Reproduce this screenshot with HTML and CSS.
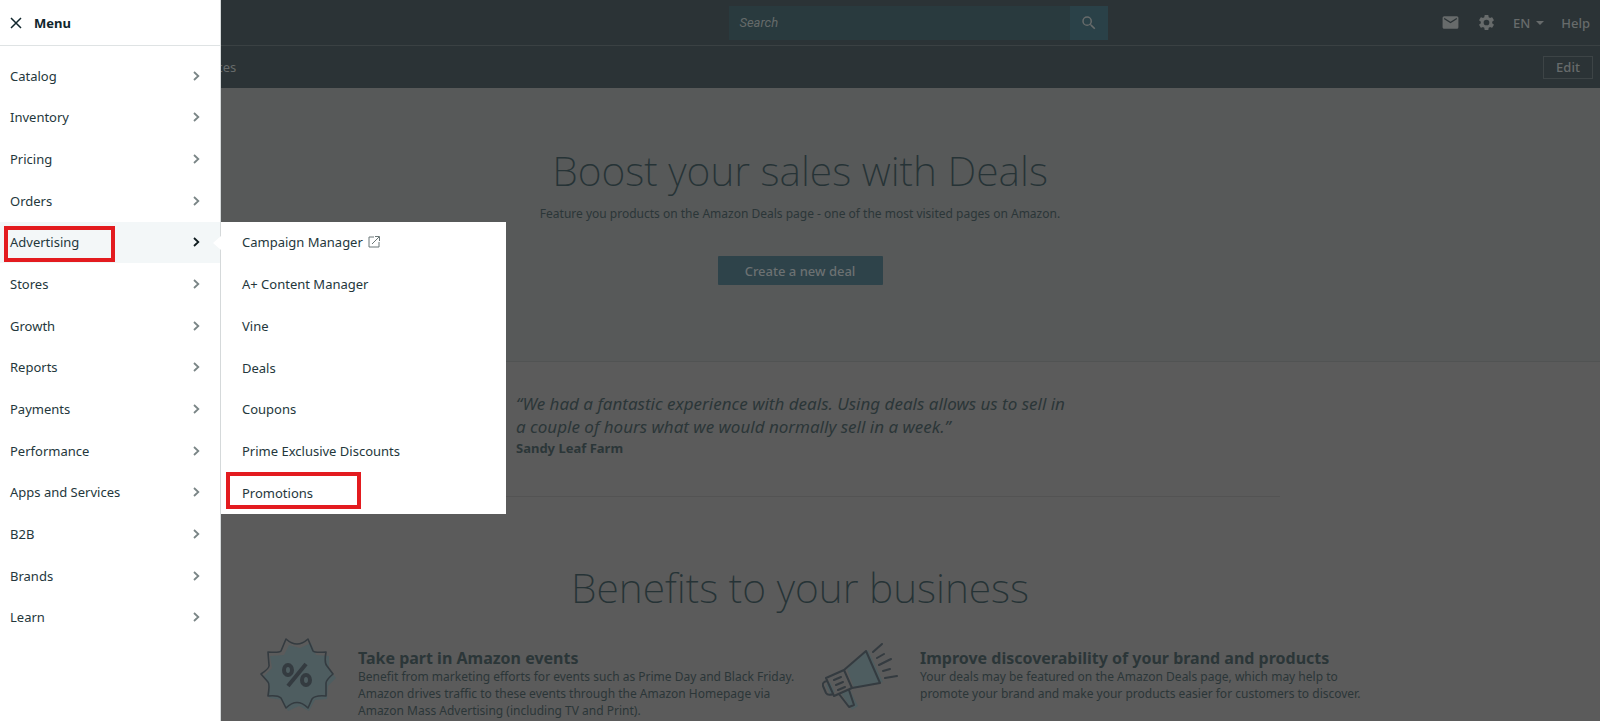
FILE: index.html
```
<!DOCTYPE html>
<html lang="en">
<head>
<meta charset="utf-8">
<title>Deals</title>
<link rel="stylesheet" href="styles.css">
</head>
<body>
<svg width="0" height="0" class="symbols" aria-hidden="true">
  <symbol id="chevron" viewBox="0 0 7 10"><path fill="none" stroke="currentColor" stroke-width="1.800" d="m1 1 4.300 4L1 9"/></symbol>
</svg>
<header class="topbar">
  <form class="search">
    <input class="search-input" type="text" placeholder="Search" aria-label="Search">
    <button class="search-button" type="button" aria-label="Search">
      <svg width="18" height="18" viewBox="0 0 24 24"><path fill="currentColor" d="M15.5 14h-.79l-.28-.27A6.47 6.47 0 0 0 16 9.5 6.5 6.5 0 1 0 9.5 16c1.61 0 3.09-.59 4.23-1.57l.27.28v.79l5 4.99L20.49 19l-4.99-5zm-6 0a4.5 4.5 0 1 1 0-9 4.5 4.5 0 0 1 0 9z"/></svg>
    </button>
  </form>
  <div class="tools">
    <a class="tool" href="#" aria-label="Messages"><svg width="19" height="19" viewBox="0 0 24 24"><path fill="currentColor" d="M20 4H4a2 2 0 0 0-2 2v12c0 1.100.9 2 2 2h16a2 2 0 0 0 2-2V6a2 2 0 0 0-2-2zm0 4-8 5-8-5V6l8 5 8-5v2z"/></svg></a>
    <a class="tool" href="#" aria-label="Settings"><svg width="19" height="19" viewBox="0 0 24 24"><path fill="currentColor" d="M19.140 12.940c.04-.3.060-.61.060-.94s-.02-.64-.07-.94l2.030-1.580a.49.49 0 0 0 .12-.61l-1.920-3.320a.49.49 0 0 0-.59-.22l-2.390.96a7 7 0 0 0-1.620-.94l-.36-2.540a.48.48 0 0 0-.48-.41h-3.840a.47.47 0 0 0-.47.41l-.36 2.540c-.59.24-1.130.57-1.620.94l-2.390-.96a.48.48 0 0 0-.59.22L2.740 8.870a.47.47 0 0 0 .12.61l2.030 1.580c-.05.3-.09.63-.09.94s.02.64.07.94l-2.030 1.580a.49.49 0 0 0-.12.61l1.920 3.320c.12.22.37.29.59.22l2.390-.96c.5.38 1.030.7 1.620.94l.36 2.540c.05.24.24.41.48.41h3.840c.24 0 .44-.17.47-.41l.36-2.540a7 7 0 0 0 1.620-.94l2.390.96c.22.080.47 0 .59-.22l1.920-3.320a.47.47 0 0 0-.12-.61zM12 15.600a3.600 3.600 0 1 1 0-7.200 3.600 3.600 0 0 1 0 7.200z"/></svg></a>
    <button class="tool language" type="button">EN <svg width="8" height="4" viewBox="0 0 8 4"><path fill="currentColor" d="M0 0h8L4 4z"/></svg></button>
    <a class="tool" href="#">Help</a>
  </div>
</header>
<nav class="subbar">
  <a class="subbar-link" href="#">Apps and Services</a>
  <button class="edit" type="button">Edit</button>
</nav>

<main>
  <section class="hero">
    <h1 class="display">Boost your sales with Deals</h1>
    <p class="lead">Feature you products on the Amazon Deals page - one of the most visited pages on Amazon.</p>
    <button class="primary" type="button">Create a new deal</button>
  </section>
  <section class="quote">
    <blockquote class="quote-body">
      <p class="quote-text">“We had a fantastic experience with deals. Using deals allows us to sell in<br>a couple of hours what we would normally sell in a week.”</p>
      <cite class="quote-author">Sandy Leaf Farm</cite>
    </blockquote>
  </section>
  <section class="benefits">
    <h2 class="display">Benefits to your business</h2>
    <div class="benefit-grid">
      <article class="benefit">
        <svg class="benefit-icon" width="76" height="76" viewBox="0 0 76 76">
          <path fill="#4e5d60" d="M29 8 40 11 51 6 56 18 69 19 69 32 76 41 68 49 67 62 55 63 49 74 39 69 28 74 22 63 9 61 9 49 4 39 12 31 10 19 24 18Z"/>
          <path fill="none" stroke="#343b40" stroke-width="1.600" stroke-linejoin="round" d="M26 2Q37 12 48 2L53 14Q55 16 66 15Q64 26 67 29L73 37Q66 43 66 46L66 59Q55 58 52 62L48 71Q37 60 26 71L21 61Q18 58 8 59Q10 47 8 45L1 37Q10 31 9 28L8 15Q19 16 21 14Z"/>
          <g fill="none" stroke="#343b40" stroke-width="4"><ellipse cx="28" cy="33" rx="4" ry="5"/><ellipse cx="46" cy="43" rx="4" ry="5"/><path d="m46 27-18 22"/></g>
        </svg>
        <div>
          <h3 class="benefit-title">Take part in Amazon events</h3>
          <p class="benefit-text">Benefit from marketing efforts for events such as Prime Day and Black Friday. Amazon drives traffic to these events through the Amazon Homepage via Amazon Mass Advertising (including TV and Print).</p>
        </div>
      </article>
      <article class="benefit">
        <svg class="benefit-icon" width="76" height="76" viewBox="0 0 76 76">
          <path fill="#4e5d60" d="m25 32 21-19 15 32-29 6Zm-6 24 9-3 8 16-6 4Zm-15-8 4-3 5 10-5 2Z"/>
          <g fill="none" stroke="#343b40" stroke-width="2" stroke-linejoin="round" stroke-linecap="round">
            <path d="M22 33 44 14 58 46 30 51M4 41 22 33 30 51 12 59ZM5 44Q0 45 1 49L4 56Q6 59 11 57M17 57 27 70 32 68 27 53M12 43l7-3m-5 8 7-3m-5 8 7-3M51 15l9-8M55 21l7-4M57 28l12-6M61 34l7-2M63 41l12-2"/>
          </g>
        </svg>
        <div>
          <h3 class="benefit-title">Improve discoverability of your brand and products</h3>
          <p class="benefit-text">Your deals may be featured on the Amazon Deals page, which may help to promote your brand and make your products easier for customers to discover.</p>
        </div>
      </article>
    </div>
  </section>
</main>

<aside class="drawer">
  <div class="drawer-head">
    <button class="close" type="button" aria-label="Close menu"><svg width="12" height="12" viewBox="0 0 12 12"><path fill="none" stroke="currentColor" stroke-width="1.500" d="m1 1 10 10M11 1 1 11"/></svg></button>
    <strong>Menu</strong>
  </div>
  <ul class="menu">
    <li><a class="item" href="#">Catalog <svg class="chevron"><use href="#chevron"/></svg></a></li>
    <li><a class="item" href="#">Inventory <svg class="chevron"><use href="#chevron"/></svg></a></li>
    <li><a class="item" href="#">Pricing <svg class="chevron"><use href="#chevron"/></svg></a></li>
    <li><a class="item" href="#">Orders <svg class="chevron"><use href="#chevron"/></svg></a></li>
    <li class="open">
      <a class="item active marked" href="#">Advertising <svg class="chevron"><use href="#chevron"/></svg></a>
      <ul class="submenu">
        <li><a class="subitem" href="#">Campaign Manager <svg width="12" height="12" viewBox="0 0 12 12"><path fill="none" stroke="#6b7778" d="M6 1H1v10h10V6M7 .5h4.500V5M11 1 4 8"/></svg></a></li>
        <li><a class="subitem" href="#">A+ Content Manager</a></li>
        <li><a class="subitem" href="#">Vine</a></li>
        <li><a class="subitem" href="#">Deals</a></li>
        <li><a class="subitem" href="#">Coupons</a></li>
        <li><a class="subitem" href="#">Prime Exclusive Discounts</a></li>
        <li><a class="subitem marked" href="#">Promotions</a></li>
      </ul>
    </li>
    <li><a class="item" href="#">Stores <svg class="chevron"><use href="#chevron"/></svg></a></li>
    <li><a class="item" href="#">Growth <svg class="chevron"><use href="#chevron"/></svg></a></li>
    <li><a class="item" href="#">Reports <svg class="chevron"><use href="#chevron"/></svg></a></li>
    <li><a class="item" href="#">Payments <svg class="chevron"><use href="#chevron"/></svg></a></li>
    <li><a class="item" href="#">Performance <svg class="chevron"><use href="#chevron"/></svg></a></li>
    <li><a class="item" href="#">Apps and Services <svg class="chevron"><use href="#chevron"/></svg></a></li>
    <li><a class="item" href="#">B2B <svg class="chevron"><use href="#chevron"/></svg></a></li>
    <li><a class="item" href="#">Brands <svg class="chevron"><use href="#chevron"/></svg></a></li>
    <li><a class="item" href="#">Learn <svg class="chevron"><use href="#chevron"/></svg></a></li>
  </ul>
</aside>
</body>
</html>
```

FILE: styles.css
```
*, *::before, *::after { box-sizing: border-box; }
body {
  margin: 0;
  height: 100vh;
  overflow: hidden;
  position: relative;
  background: #5b5b5b;
  color: #2b3638;
  font: 13px/18px "Noto Sans", "Open Sans", sans-serif;
}
h1, h2, h3, p, ul, blockquote { margin: 0; padding: 0; font-weight: 400; }
ul { list-style: none; }
a { color: inherit; text-decoration: none; }
button, input { font: inherit; color: inherit; border: 0; border-radius: 0; padding: 0; background: none; }
.symbols { position: absolute; }

/* Top bars */
.topbar {
  display: grid;
  grid-template-columns: 3fr 379px 2fr;
  align-items: center;
  height: 46px;
  padding: 0 10px 0 7px;
  background: #2b3336;
  border-bottom: 1px solid #3a4143;
  color: #676b6b;
}
.search { grid-column: 2; display: flex; height: 34px; }
.search-input { flex: 1; min-width: 0; padding: 0 10px; background: #293a3e; font-style: italic; font-family: Roboto, sans-serif; }
.search-input::placeholder { color: #656a6a; opacity: 1; }
.search-button { width: 38px; background: #2a4148; display: grid; place-items: center; }
.tools { display: flex; align-items: center; justify-content: flex-end; gap: 17px; font-weight: 500; }
.tool { display: flex; align-items: center; gap: 6px; }
.subbar {
  display: flex;
  align-items: center;
  justify-content: space-between;
  height: 42px;
  padding: 0 7px 0 126px;
  background: #2b3336;
  color: #676b6b;
}
.edit { width: 50px; height: 23px; border: 1px solid #3d4446; font-weight: 500; }

/* Page */
.display { font-size: 41px; line-height: 50px; font-weight: 200; text-align: center; color: #263336; }
.hero {
  height: 274px;
  padding-top: 57px;
  display: flex;
  flex-direction: column;
  align-items: center;
  background: #575959;
  border-bottom: 1px solid #515353;
}
.lead { margin-top: 10px; font-size: 12px; }
.primary { margin-top: 33px; width: 165px; height: 29px; border-radius: 1px; background: #2e434a; color: #6c7172; font-weight: 500; }
.quote {
  width: 960px;
  height: 135px;
  margin: 0 auto;
  padding: 30px 0 0 196px;
  border-bottom: 1px solid #535353;
}
.quote-text { font-size: 17px; line-height: 23px; font-style: italic; }
.quote-author { display: block; margin-top: 1px; font-style: normal; font-weight: 700; }
.benefits { max-width: 1124px; margin: 0 auto; padding-top: 65px; }
.benefit-grid { display: grid; grid-template-columns: 1fr 1fr; margin-top: 25px; }
.benefit { display: flex; gap: 22px; padding-left: 22px; }
.benefit-icon { flex: none; }
.benefit-title { margin-top: 11px; font-size: 16px; line-height: 20px; font-weight: 700; }
.benefit-text { font-size: 12px; line-height: 17px; }

/* Drawer */
.drawer {
  position: absolute;
  inset: 0 auto 0 0;
  width: 221px;
  background: #fff;
  border-right: 1px solid #d5d9da;
  color: #24373c;
}
.drawer-head {
  display: flex;
  align-items: center;
  gap: 12px;
  height: 46px;
  padding: 0 10px;
  border-bottom: 1px solid #dfe3e4;
  color: #10262c;
}
.close { display: flex; }
.menu { display: grid; grid-auto-rows: 1fr; height: 583px; margin-top: 9px; }
.open { position: relative; }
.item { display: flex; align-items: center; justify-content: space-between; height: 100%; padding: 0 20px 0 10px; }
.active { background: #f3f7f8; }
.chevron { width: 7px; height: 10px; color: #7a8586; }
.active .chevron { color: #0f1c20; }
.submenu {
  position: absolute;
  left: 221px;
  top: 0;
  width: 285px;
  height: 292px;
  display: grid;
  grid-auto-rows: 1fr;
  background: #fff;
}
.submenu::before {
  content: "";
  position: absolute;
  left: -8px;
  top: 14px;
  border: 7px solid transparent;
  border-right: 8px solid #fff;
  border-left: 0;
}
.subitem { display: flex; align-items: center; gap: 5px; height: 100%; padding-left: 21px; }
.marked { position: relative; }
.marked::after { content: ""; position: absolute; border: 4px solid #e31b1f; }
.item.marked::after { left: 4px; top: 4px; width: 111px; height: 36px; }
.subitem.marked::after { left: 5px; top: 0; width: 135px; height: 37px; }
```
